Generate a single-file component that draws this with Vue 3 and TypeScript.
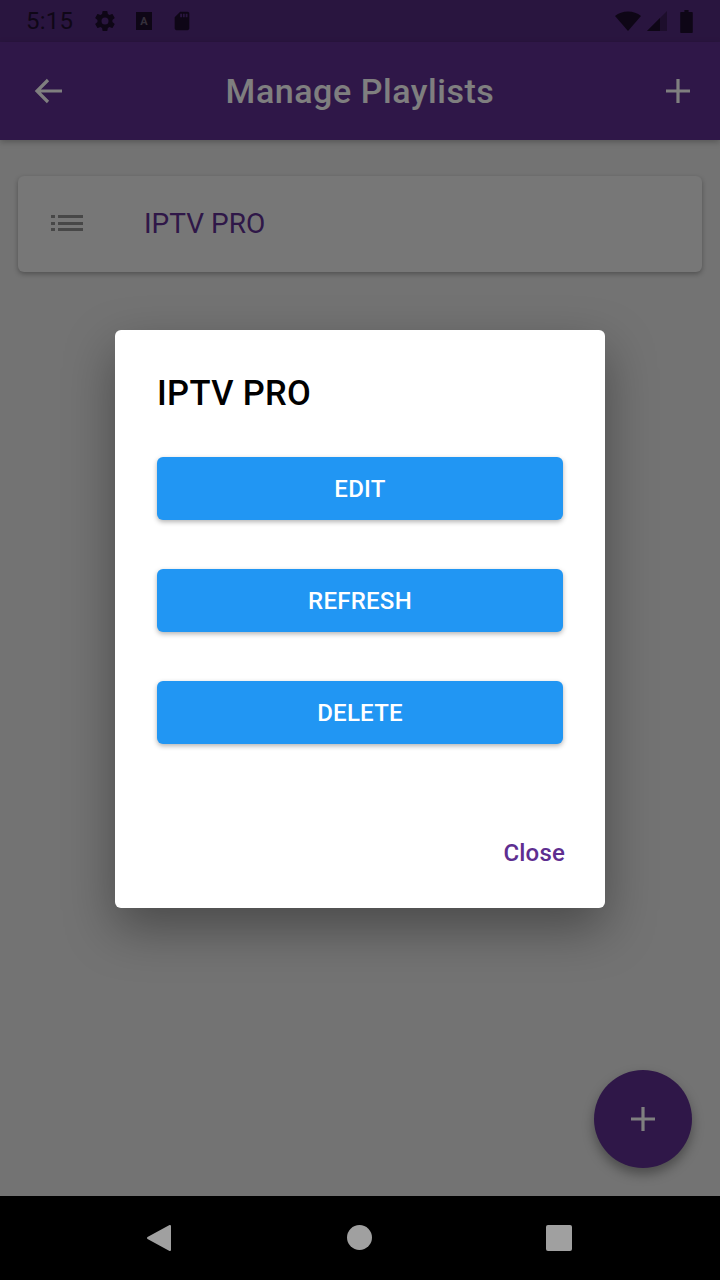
<script setup lang="ts">
const actions: string[] = ['EDIT', 'REFRESH', 'DELETE']
</script>

<template>
  <div class="screen">
    <header class="status">
      <span class="time">5:15</span>
      <svg class="st gear" viewBox="0 0 24 24"><path d="M19.4 13c.04-.32.07-.65.07-1s-.03-.68-.07-1l2.1-1.65c.2-.15.25-.42.12-.64l-2-3.46c-.12-.22-.38-.3-.6-.22l-2.5 1c-.52-.4-1.08-.73-1.7-.98l-.37-2.65A.5.5 0 0 0 13.95 2h-4a.5.5 0 0 0-.5.42l-.37 2.65c-.62.25-1.18.59-1.7.98l-2.5-1c-.22-.08-.48 0-.6.22l-2 3.46c-.13.22-.07.49.12.64L4.5 11c-.04.32-.07.66-.07 1s.03.68.07 1l-2.1 1.65c-.2.15-.25.42-.12.64l2 3.46c.12.22.38.3.6.22l2.5-1c.52.4 1.08.73 1.7.98l.37 2.65c.03.24.24.42.5.42h4c.25 0 .46-.18.5-.42l.37-2.65c.62-.25 1.18-.59 1.7-.98l2.5 1c.22.08.48 0 .6-.22l2-3.46c.13-.22.07-.49-.12-.64L19.4 13zM12 15.5a3.5 3.5 0 1 1 0-7 3.5 3.5 0 0 1 0 7z" /></svg>
      <span class="a-box">A</span>
      <svg class="st sd" viewBox="0 0 24 24"><path d="M18 2h-8L4 8v12c0 1.1.9 2 2 2h12c1.100 0 2-.9 2-2V4c0-1.100-.9-2-2-2zm-6 6h-2V4h2v4zm3 0h-2V4h2v4zm3 0h-2V4h2v4z" /></svg>
      <span class="spacer"></span>
      <svg class="wifi" viewBox="0 0 28 20"><path d="M14 20 1 5C4.500 2 9 .5 14 .5S23.500 2 27 5L14 20z" /></svg>
      <svg class="signal" viewBox="0 0 20 20"><path d="M20 0v20H0L20 0z" opacity=".45" /><path d="M13 7v13H0L13 7z" /></svg>
      <svg class="battery" viewBox="0 0 12 22"><path d="M4 0h4v2h3c.6 0 1 .4 1 1v18c0 .6-.4 1-1 1H1c-.6 0-1-.4-1-1V3c0-.6.4-1 1-1h3V0z" /></svg>
    </header>

    <nav class="appbar">
      <svg class="bar-icon" viewBox="0 0 32 32"><path d="M29 16H4M15 5 4 16l11 11" /></svg>
      <h1>Manage Playlists</h1>
      <svg class="bar-icon" viewBox="0 0 32 32"><path d="M16 4v24M4 16h24" /></svg>
    </nav>

    <main class="content">
      <section class="card">
        <svg class="list" viewBox="0 0 32 20"><path d="M0 2h4v3H0zM0 9h4v3H0zM0 15h4v3H0zM7 2h25v3H7zM7 9h25v3H7zM7 15h25v3H7z" /></svg>
        <span class="card-title">IPTV PRO</span>
      </section>
      <button class="fab" type="button" aria-label="Add">
        <svg viewBox="0 0 26 26"><path d="M13 1v24M1 13h24" /></svg>
      </button>
    </main>

    <footer class="navbar">
      <svg class="nav-back" viewBox="0 0 26 28"><path d="M24 2v24L2 14z" /></svg>
      <span class="nav-home"></span>
      <span class="nav-recent"></span>
    </footer>

    <div class="scrim">
      <div class="dialog">
        <h2>IPTV PRO</h2>
        <div class="actions">
          <button v-for="a in actions" :key="a" class="action" type="button">{{ a }}</button>
        </div>
        <div class="foot"><button class="close" type="button">Close</button></div>
      </div>
    </div>
  </div>
</template>

<style>
html, body { margin: 0; padding: 0; background: #000; }
</style>

<style scoped>
.screen {
  position: relative;
  width: 720px;
  height: 1280px;
  overflow: hidden;
  display: flex;
  flex-direction: column;
  background: #e6e6e6;
  font-family: Roboto, "Liberation Sans", sans-serif;
}
.status {
  height: 42px;
  flex: none;
  background: #532a7e;
  display: flex;
  align-items: center;
  padding: 0 27px 0 26px;
  box-sizing: border-box;
  color: #1f0f2e;
}
.time { font-size: 24px; width: 67px; line-height: 42px; letter-spacing: .2px; }
.st { fill: #1c0c2c; }
.gear { width: 24px; height: 24px; }
.a-box {
  width: 16px;
  height: 18px;
  margin-left: 19px;
  background: #1c0c2c;
  color: #6a5f76;
  font-size: 11px;
  font-weight: 700;
  display: flex;
  align-items: center;
  justify-content: center;
}
.sd { width: 22px; height: 24px; margin-left: 19px; }
.spacer { flex: 1; }
.wifi { width: 28px; height: 20px; fill: #1c0c2c; }
.signal { width: 20px; height: 20px; margin-left: 5px; fill: #1c0c2c; }
.battery { width: 13px; height: 23px; margin-left: 13px; fill: #1c0c2c; }
.appbar {
  height: 98px;
  flex: none;
  background: #5e2e90;
  display: flex;
  align-items: center;
  justify-content: space-between;
  padding: 0 26px 0 33px;
  box-sizing: border-box;
  box-shadow: 0 2px 6px rgba(0, 0, 0, .25);
  z-index: 1;
}
.appbar h1 {
  margin: 0 7px 0 0;
  color: #fff;
  font-size: 34px;
  font-weight: 500;
  letter-spacing: .55px;
}
.bar-icon { width: 32px; height: 32px; fill: none; stroke: #fff; stroke-width: 3.2; }
.content {
  flex: 1;
  position: relative;
  padding: 36px 18px 0;
}
.card {
  height: 96px;
  box-sizing: border-box;
  padding: 0 0 2px 33px;
  background: #eee;
  border-radius: 6px;
  box-shadow: 0 2px 5px rgba(0, 0, 0, .3);
  display: flex;
  align-items: center;
}
.list { width: 32px; height: 20px; fill: #8e8e8e; }
.card-title {
  margin-left: 61px;
  color: #5e2e90;
  font-size: 28px;
}
.fab {
  position: absolute;
  right: 28px;
  bottom: 28px;
  width: 98px;
  height: 98px;
  padding: 0;
  border: 0;
  border-radius: 50%;
  background: #5e2e90;
  box-shadow: 0 6px 12px rgba(0, 0, 0, .35);
  display: flex;
  align-items: center;
  justify-content: center;
}
.fab svg { width: 26px; height: 26px; fill: none; stroke: #fff; stroke-width: 3.2; }
.navbar {
  height: 84px;
  flex: none;
  background: #000;
  position: relative;
  z-index: 3;
}
.nav-back {
  position: absolute;
  left: 146px;
  top: 28px;
  width: 26px;
  height: 28px;
  fill: #a0a0a0;
  stroke: #a0a0a0;
  stroke-width: 2;
  stroke-linejoin: round;
}
.nav-home { position: absolute; left: 347px; top: 29px; width: 25px; height: 25px; border-radius: 50%; background: #a0a0a0; }
.nav-recent { position: absolute; left: 546px; top: 29px; width: 26px; height: 26px; border-radius: 2px; background: #a0a0a0; }
.scrim {
  position: absolute;
  inset: 0;
  background: rgba(0, 0, 0, .5);
  z-index: 2;
}
.dialog {
  position: absolute;
  left: 115px;
  top: 330px;
  width: 490px;
  height: 578px;
  box-sizing: border-box;
  padding: 42px 42px 0;
  background: #fff;
  border-radius: 6px;
  box-shadow: 0 20px 50px rgba(0, 0, 0, .36);
  display: flex;
  flex-direction: column;
}
.dialog h2 {
  margin: 0;
  height: 42px;
  line-height: 42px;
  font-size: 34.500px;
  font-weight: 500;
  letter-spacing: .35px;
  color: #000;
}
.actions {
  margin-top: 43px;
  display: flex;
  flex-direction: column;
  gap: 49px;
}
.action {
  height: 63px;
  border: 0;
  padding: 0;
  border-radius: 6px;
  background: #2196f3;
  color: #fff;
  font: 500 24px Roboto, "Liberation Sans", sans-serif;
  letter-spacing: .25px;
  box-shadow: 0 2px 5px rgba(0, 0, 0, .3);
}
.foot {
  margin-top: auto;
  display: flex;
  justify-content: flex-end;
  padding-bottom: 41px;
  margin-right: -2px;
}
.close {
  border: 0;
  padding: 0;
  background: none;
  color: #5e2e90;
  font: 500 24px Roboto, "Liberation Sans", sans-serif;
  letter-spacing: .2px;
}
</style>
